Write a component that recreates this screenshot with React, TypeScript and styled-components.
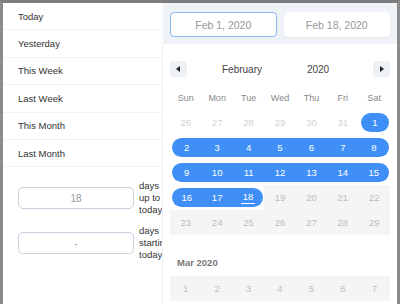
import React from 'react'
import styled, { createGlobalStyle } from 'styled-components'

const GlobalStyle = createGlobalStyle`
  html, body { margin: 0; padding: 0; background: #fff; }
  body { font-family: "Liberation Sans", Arial, sans-serif; }
  * { box-sizing: border-box; }
`

const Frame = styled.div`
  width: 400px;
  height: 304px;
  border-top: 3px solid #7c7c7c;
  border-left: 3px solid #8c8c8c;
  border-right: 3px solid #8c8c8c;
  display: flex;
  overflow: hidden;
  background: #fff;
`

const Sidebar = styled.div`
  width: 160px;
  flex: none;
  overflow: hidden;
`

const Preset = styled.div`
  height: 27.4px;
  padding-left: 15px;
  display: flex;
  align-items: center;
  border-bottom: 1px solid #f3f3f3;
  font-size: 9.5px;
  color: #333;
`

const DaysForm = styled.div`
  padding: 13px 0 0 15px;
  display: flex;
  flex-direction: column;
  gap: 9px;
`

const DaysRow = styled.div`
  display: flex;
  align-items: center;
  gap: 5px;
`

const DaysInput = styled.div`
  width: 116px;
  height: 22px;
  flex: none;
  border: 1px solid #c9d0de;
  border-radius: 5px;
  display: flex;
  align-items: center;
  justify-content: center;
  color: #999;
  font-size: 10px;
`

const DaysLabel = styled.div`
  width: 24px;
  font-size: 9.5px;
  line-height: 12px;
  color: #333;
  white-space: pre;
`

const Picker = styled.div`
  flex: 1;
  display: flex;
  flex-direction: column;
`

const DateBar = styled.div`
  height: 41px;
  background: #eff2f7;
  padding: 9px 7px 7px;
  display: flex;
  gap: 7px;
`

const DateBox = styled.div<{ $active?: boolean }>`
  flex: 1;
  height: 25px;
  background: #fff;
  border: 1px solid ${p => (p.$active ? '#8db6f5' : '#fff')};
  border-radius: 4px;
  box-shadow: ${p => (p.$active ? 'none' : '0 1px 2px rgba(0, 0, 0, 0.06)')};
  display: flex;
  align-items: center;
  justify-content: center;
  color: #999;
  font-size: 10.5px;
`

const Body = styled.div`
  flex: 1;
  padding: 0 7px;
  border-left: 1px solid #f1f1f1;
  margin-left: -1px;
`

const Nav = styled.div`
  margin-top: 17px;
  height: 16px;
  display: flex;
  align-items: center;
`

const NavButton = styled.div`
  width: 17px;
  height: 16px;
  border-radius: 3px;
  background: #eef1f6;
  display: flex;
  align-items: center;
  justify-content: center;
`

const NavTitle = styled.div`
  flex: 1;
  display: flex;
  justify-content: center;
  font-size: 10px;
  color: #444;
`

const NavPart = styled.span`
  width: 76px;
  text-align: center;
`

const Grid = styled.div`
  display: grid;
  grid-template-columns: repeat(7, 1fr);
`

const WeekDay = styled.div`
  height: 24px;
  margin-top: 9px;
  display: flex;
  align-items: center;
  justify-content: center;
  font-size: 9px;
  color: #888;
`

type Kind = 'other' | 'range' | 'future'

const Cell = styled.div<{ $kind: Kind }>`
  height: 25px;
  display: flex;
  align-items: center;
  background: ${p => (p.$kind === 'future' ? '#f5f5f5' : '#fff')};
  font-size: 9.5px;
  color: ${p => (p.$kind === 'other' ? '#d2d2d2' : p.$kind === 'future' ? '#bdbdbd' : '#fff')};
`

const Pill = styled.div<{ $on: boolean; $start: boolean; $end: boolean }>`
  flex: 1;
  height: 19px;
  display: flex;
  align-items: center;
  justify-content: center;
  background: ${p => (p.$on ? '#3f8ff6' : 'transparent')};
  margin-left: ${p => (p.$start ? '2px' : '0')};
  margin-right: ${p => (p.$end ? '1px' : '0')};
  border-radius: ${p => `${p.$start ? 10 : 0}px ${p.$end ? 10 : 0}px ${p.$end ? 10 : 0}px ${p.$start ? 10 : 0}px`};
`

const Today = styled.span`
  border-bottom: 1px solid #fff;
  padding: 0 2px 1px;
`

const MonthLabel = styled.div`
  height: 41px;
  padding: 21px 0 0 7px;
  font-size: 9.5px;
  line-height: 14px;
  font-weight: bold;
  color: #777;
`

const Arrow = ({ dir }: { dir: 'left' | 'right' }) => (
  <svg width="5" height="6" viewBox="0 0 5 6">
    {dir === 'left' ? <path d="M4 0 L0 3 L4 6 Z" fill="#222" /> : <path d="M1 0 L5 3 L1 6 Z" fill="#222" />}
  </svg>
)

const presets = ['Today', 'Yesterday', 'This Week', 'Last Week', 'This Month', 'Last Month']
const weekDays = ['Sun', 'Mon', 'Tue', 'Wed', 'Thu', 'Fri', 'Sat']

type Day = { n: number; kind: Kind }

const feb: Day[] = [
  ...[26, 27, 28, 29, 30, 31].map(n => ({ n, kind: 'other' as Kind })),
  ...Array.from({ length: 29 }, (_, i) => ({ n: i + 1, kind: (i + 1 <= 18 ? 'range' : 'future') as Kind })),
]

const mar: Day[] = Array.from({ length: 7 }, (_, i) => ({ n: i + 1, kind: 'future' as Kind }))

const renderDays = (days: Day[], rangeEnd = 18, today = 18) =>
  days.map((d, i) => {
    const on = d.kind === 'range'
    const col = i % 7
    const start = on && (col === 0 || d.n === 1)
    const end = on && (col === 6 || d.n === rangeEnd)
    return (
      <Cell key={i} $kind={d.kind}>
        <Pill $on={on} $start={start} $end={end}>
          {on && d.n === today ? <Today>{d.n}</Today> : d.n}
        </Pill>
      </Cell>
    )
  })

export default function App() {
  return (
    <>
      <GlobalStyle />
      <Frame>
        <Sidebar>
          {presets.map(p => <Preset key={p}>{p}</Preset>)}
          <DaysForm>
            <DaysRow>
              <DaysInput>18</DaysInput>
              <DaysLabel>{'days\nup to\ntoday'}</DaysLabel>
            </DaysRow>
            <DaysRow>
              <DaysInput>-</DaysInput>
              <DaysLabel>{'days\nstarting\ntoday'}</DaysLabel>
            </DaysRow>
          </DaysForm>
        </Sidebar>
        <Picker>
          <DateBar>
            <DateBox $active>Feb 1, 2020</DateBox>
            <DateBox>Feb 18, 2020</DateBox>
          </DateBar>
          <Body>
            <Nav>
              <NavButton><Arrow dir="left" /></NavButton>
              <NavTitle>
                <NavPart>February</NavPart>
                <NavPart>2020</NavPart>
              </NavTitle>
              <NavButton><Arrow dir="right" /></NavButton>
            </Nav>
            <Grid>
              {weekDays.map(w => <WeekDay key={w}>{w}</WeekDay>)}
              {renderDays(feb)}
            </Grid>
            <MonthLabel>Mar 2020</MonthLabel>
            <Grid>{renderDays(mar)}</Grid>
          </Body>
        </Picker>
      </Frame>
    </>
  )
}
